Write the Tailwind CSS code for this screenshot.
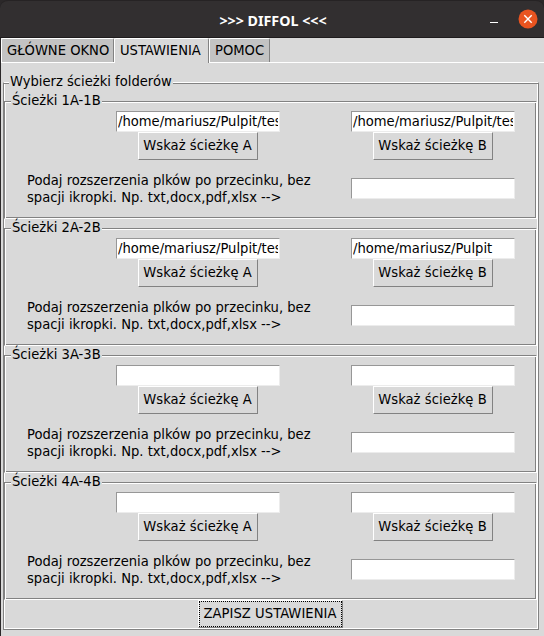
<!DOCTYPE html>
<html lang="pl">
<head>
<meta charset="utf-8">
<title>DIFFOL</title>
<script src="https://cdn.jsdelivr.net/npm/@tailwindcss/browser@4"></script>
</head>
<body class="w-[544px] h-[636px] overflow-hidden bg-[#2b2829] text-black text-[14.6px] leading-[17px] font-['DejaVu_Sans_Condensed','DejaVu_Sans',sans-serif] [font-stretch:condensed]">
<div class="flex flex-col w-full h-full">
  <header class="grid grid-cols-[1fr_auto_1fr] items-center h-[38px] pt-[2px] bg-[#322f30] border-t border-b border-t-[#262324] border-b-[#1f1c1d] rounded-t-[8px] shrink-0">
    <span></span>
    <h1 class="pl-[2px] text-white font-bold text-[14.25px] font-['Noto_Sans',sans-serif] [font-stretch:normal]">&gt;&gt;&gt; DIFFOL &lt;&lt;&lt;</h1>
    <div class="flex items-center justify-end gap-[20px] pr-[6px]">
      <span class="w-2 h-px bg-white mt-1"></span>
      <svg class="w-5 h-5 -mt-[2px]" viewBox="0 0 20 20"><circle cx="10" cy="10" r="9.5" fill="#e95420"/><path d="M6.3 6.3l7.4 7.4M13.7 6.3l-7.4 7.4" stroke="#fff" stroke-width="1.4"/></svg>
    </div>
  </header>
  <div class="flex flex-col grow ml-px bg-[#d9d9d9]">
    <nav class="flex h-[25px] shrink-0 border-b border-white">
      <div class="w-[113px] h-[24px] pl-[5px] pt-[2px] bg-[#c3c3c3] border-t border-l border-white border-r border-r-[#828282] rounded-t-[2px] whitespace-nowrap">GŁÓWNE OKNO</div>
      <div class="w-[95px] h-[25px] pl-[5px] pt-[2px] bg-[#d9d9d9] border-t border-l border-white border-r border-r-[#828282] rounded-t-[2px] whitespace-nowrap">USTAWIENIA</div>
      <div class="w-[61px] h-[24px] pl-[5px] pt-[2px] bg-[#c3c3c3] border-t border-l border-white border-r border-r-[#828282] rounded-t-[2px] whitespace-nowrap">POMOC</div>
    </nav>
    <main class="relative ml-[2px] mt-[19px] w-[536px] h-[548px] border border-[#828282] border-t-white shadow-[inset_0_1px_0_#828282,inset_1px_0_0_#fff,inset_-1px_-1px_0_#fff]">
      <h2 class="absolute left-[5px] -top-[11px] px-px bg-[#d9d9d9] whitespace-nowrap">Wybierz ścieżki folderów</h2>
      <div id="groups" class="flex flex-col pt-[18px] gap-[9px]"></div>
      <div class="flex pl-[194px]"><button class="w-[145px] h-[28px] border border-white border-r-[#828282] border-b-[#828282]"><span class="flex items-center justify-center h-full pb-[3px] pr-[1px] border border-dotted border-black whitespace-nowrap tracking-[0.06px]">ZAPISZ USTAWIENIA</span></button></div>
    </main>
  </div>
</div>
<script>
const entry = v => `<div class="w-[164px] h-[21px] bg-white border border-[#979797] border-r-[#ececec] border-b-[#ececec] px-px"><div class="h-[19px] overflow-hidden whitespace-nowrap">${v}</div></div>`;
const button = t => `<button class="w-[120px] h-[28px] pb-[3px] pr-[1px] border border-white border-r-[#828282] border-b-[#828282] whitespace-nowrap tracking-[0.05px]">${t}</button>`;
const p = '/home/mariusz/Pulpit/tes';
const rows = [['1A-1B', p, p], ['2A-2B', p, '/home/mariusz/Pulpit'], ['3A-3B', '', ''], ['4A-4B', '', '']];
document.getElementById('groups').innerHTML = rows.map(([n, a, b]) => `
<section class="relative w-[533px] h-[118px] border border-[#828282] border-r-white border-b-white shadow-[inset_1px_1px_0_#fff,inset_-1px_-1px_0_#828282]">
  <h3 class="absolute left-[6px] -top-[10px] px-px leading-[15px] bg-[#d9d9d9] whitespace-nowrap">Ścieżki ${n}</h3>
  <div class="flex pl-[111px] pt-[9px] gap-[71px]">
    <div class="flex flex-col items-center">${entry(a)}${button('Wskaż ścieżkę A')}</div>
    <div class="flex flex-col items-center">${entry(b)}${button('Wskaż ścieżkę B')}</div>
  </div>
  <div class="flex pl-[22px] pt-[11px]">
    <p class="w-[324px] whitespace-nowrap">Podaj rozszerzenia plków po przecinku, bez<br>spacji ikropki. Np. txt,docx,pdf,xlsx --&gt;</p>
    <div class="pt-[7px]">${entry('')}</div>
  </div>
</section>`).join('');
</script>
</body>
</html>
